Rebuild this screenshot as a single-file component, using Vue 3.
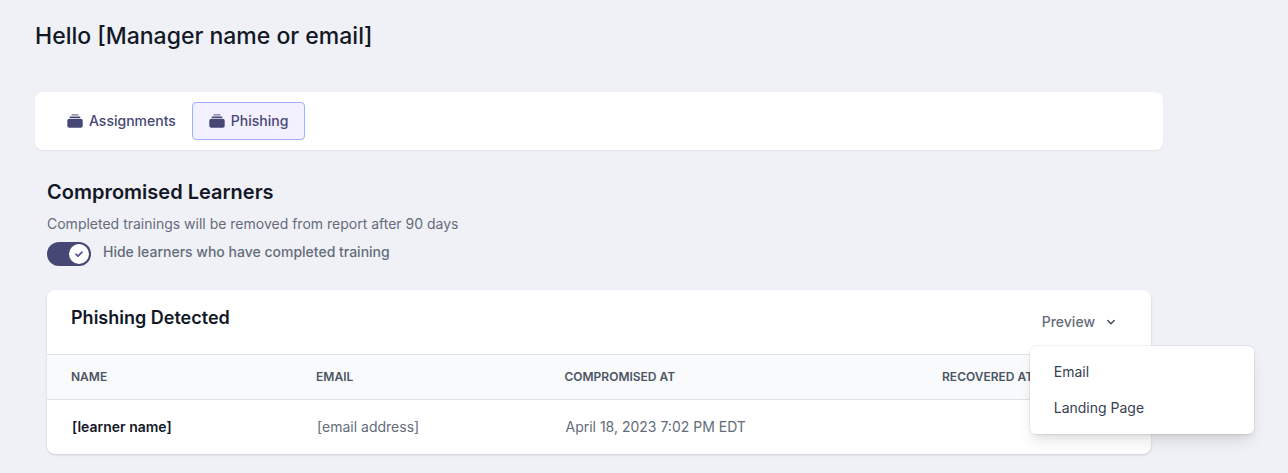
<script setup>
import { ref } from 'vue'

const tabs = ['Assignments', 'Phishing']
const activeTab = ref('Phishing')
const hideCompleted = ref(true)
const menuOpen = ref(true)
const previews = ['Email', 'Landing Page']
const learners = [
  { name: '[learner name]', email: '[email address]', compromised: 'April 18, 2023 7:02 PM EDT', recovered: '' },
]
</script>

<template>
  <main class="page">
    <h1 class="greeting">Hello [Manager name or email]</h1>

    <nav class="tabs" aria-label="Reports">
      <button
        v-for="tab in tabs"
        :key="tab"
        type="button"
        class="tab"
        :class="{ active: tab === activeTab }"
        @click="activeTab = tab"
      >
        <svg class="tab-icon" viewBox="0 0 16 16" aria-hidden="true">
          <rect x="4.4" y="1.2" width="7.2" height="1.4" rx="0.7" opacity="0.75" />
          <rect x="2.6" y="3.4" width="10.8" height="1.5" rx="0.7" />
          <rect x="0.3" y="5.7" width="15.4" height="9" rx="2" />
        </svg>
        {{ tab }}
      </button>
    </nav>

    <section class="report">
      <h2 class="title">Compromised Learners</h2>
      <p class="note">Completed trainings will be removed from report after 90 days</p>
      <label class="toggle">
        <input v-model="hideCompleted" type="checkbox" role="switch" class="toggle-input" />
        <span class="track">
          <span class="knob">
            <svg viewBox="0 0 12 12" class="check" aria-hidden="true">
              <path d="M3 6.3 L5 8.2 L9 4.2" />
            </svg>
          </span>
        </span>
        <span class="toggle-text">Hide learners who have completed training</span>
      </label>

      <div class="card">
        <header class="card-head">
          <h3 class="card-title">Phishing Detected</h3>
          <div class="dropdown">
            <button type="button" class="preview" :aria-expanded="menuOpen" @click="menuOpen = !menuOpen">
              Preview
              <svg viewBox="0 0 12 12" class="chevron" aria-hidden="true">
                <path d="M2.8 4.5 L6 7.7 L9.2 4.5" />
              </svg>
            </button>
            <div v-if="menuOpen" class="menu">
              <a v-for="item in previews" :key="item" href="#" class="menu-item">{{ item }}</a>
            </div>
          </div>
        </header>

        <table class="table">
          <thead>
            <tr>
              <th scope="col" class="col-name">Name</th>
              <th scope="col" class="col-email">Email</th>
              <th scope="col" class="col-compromised">Compromised at</th>
              <th scope="col">Recovered at</th>
            </tr>
          </thead>
          <tbody>
            <tr v-for="learner in learners" :key="learner.name">
              <td class="learner">{{ learner.name }}</td>
              <td>{{ learner.email }}</td>
              <td>{{ learner.compromised }}</td>
              <td>{{ learner.recovered }}</td>
            </tr>
          </tbody>
        </table>
      </div>
    </section>
  </main>
</template>

<style>
body {
  background: #f0f1f6;
}
</style>

<style scoped>
.page {
  padding: 20px 125px 19px 35px;
  font-family: Inter, "Liberation Sans", sans-serif;
  font-size: 14px;
  line-height: 20px;
  color: #121826;
}
.greeting {
  margin: 0 0 40px;
  font-size: 23px;
  line-height: 32px;
  font-weight: 500;
}
.tabs {
  display: flex;
  padding: 10px 16px;
  border-radius: 8px;
  background: #fff;
  box-shadow: 0 1px 2px rgba(0, 0, 0, 0.06);
}
.tab {
  display: flex;
  align-items: center;
  gap: 6px;
  height: 38px;
  padding: 0 16px;
  border: 0;
  border-radius: 4px;
  background: none;
  color: #464775;
  font: inherit;
  font-weight: 500;
}
.tab.active {
  border: 1px solid #a0b0fa;
  background: #f3f0ff;
}
.tab-icon {
  width: 16px;
  height: 16px;
  fill: currentColor;
}
.report {
  padding: 28px 12px 0;
}
.title {
  margin: 0 0 8px;
  font-size: 20px;
  line-height: 28px;
  font-weight: 600;
}
.note {
  margin: 0 0 8px;
  color: #646c7a;
}
.toggle {
  display: flex;
  gap: 12px;
  color: #646c7a;
  font-weight: 500;
}
.toggle-input {
  position: absolute;
  opacity: 0;
}
.track {
  display: flex;
  align-items: center;
  box-sizing: border-box;
  width: 44px;
  height: 24px;
  padding: 2px;
  border-radius: 12px;
  background: #b8bcc8;
}
.toggle-input:checked + .track {
  justify-content: flex-end;
  background: #464775;
}
.knob {
  display: flex;
  align-items: center;
  justify-content: center;
  width: 20px;
  height: 20px;
  border-radius: 50%;
  background: #fff;
}
.check {
  width: 12px;
  height: 12px;
  fill: none;
  stroke: #5a55a0;
  stroke-width: 1.8;
  stroke-linecap: round;
  stroke-linejoin: round;
}
.card {
  margin-top: 24px;
  border-radius: 8px;
  background: #fff;
  box-shadow: 0 1px 3px rgba(0, 0, 0, 0.1), 0 1px 2px rgba(0, 0, 0, 0.06);
}
.card-head {
  display: flex;
  justify-content: space-between;
  align-items: flex-start;
  padding: 13px 24px;
}
.card-title {
  margin: 0;
  font-size: 18px;
  line-height: 30px;
  font-weight: 600;
}
.dropdown {
  position: relative;
}
.preview {
  display: flex;
  align-items: center;
  gap: 10px;
  height: 38px;
  padding: 0 10px 0 12px;
  border: 0;
  background: none;
  color: #646c7a;
  font: inherit;
  font-weight: 500;
}
.chevron {
  width: 12px;
  height: 12px;
  fill: none;
  stroke: #4b5563;
  stroke-width: 1.6;
  stroke-linecap: round;
  stroke-linejoin: round;
}
.menu {
  position: absolute;
  top: 43px;
  left: 0;
  z-index: 1;
  box-sizing: border-box;
  width: 224px;
  padding: 8px 0;
  border-radius: 6px;
  background: #fff;
  box-shadow: 0 0 0 1px rgba(0, 0, 0, 0.05), 0 10px 15px -3px rgba(0, 0, 0, 0.1), 0 4px 6px -2px rgba(0, 0, 0, 0.07);
}
.menu-item {
  display: block;
  padding: 8px 24px;
  color: #374151;
  text-decoration: none;
}
.table {
  width: 100%;
  border-collapse: separate;
  border-spacing: 0;
  table-layout: fixed;
}
.table th {
  box-sizing: border-box;
  padding: 14px 24px;
  border-top: 1px solid #dfe1e6;
  border-bottom: 1px solid #dfe1e6;
  background: #f9fafc;
  color: #4b5563;
  font-size: 12px;
  line-height: 16px;
  font-weight: 600;
  text-align: left;
  text-transform: uppercase;
}
.table td {
  padding: 17px 25px;
  color: #646c7a;
}
.table .learner {
  color: #121826;
  font-weight: 600;
}
.col-name {
  width: 22.2%;
}
.col-email {
  width: 22.5%;
}
.col-compromised {
  width: 34.2%;
}
</style>
